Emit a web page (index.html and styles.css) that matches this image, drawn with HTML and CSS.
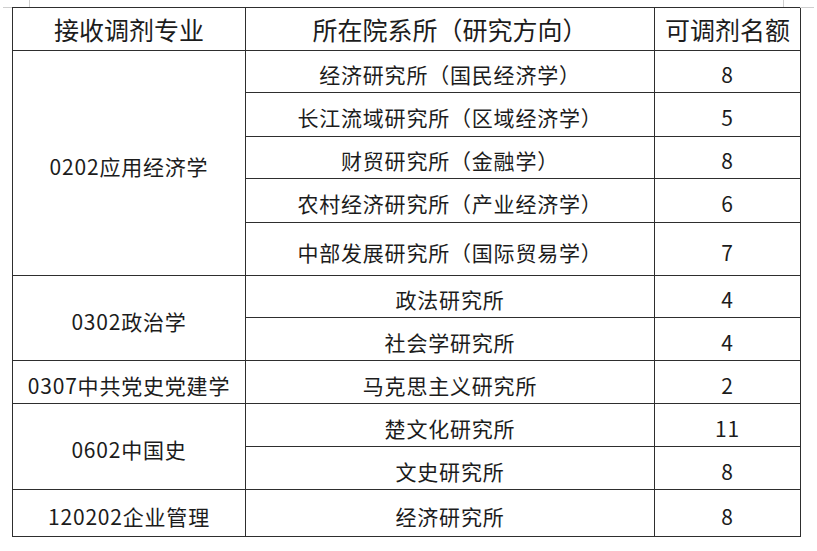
FILE: index.html
```html
<!DOCTYPE html>
<html lang="zh-CN">
<head>
<meta charset="utf-8">
<link rel="stylesheet" href="styles.css">
</head>
<body>
<div class="page">
  <span class="mark mark-tl-v"></span>
  <span class="mark mark-tl-h"></span>
  <span class="mark mark-tr-v"></span>
  <span class="mark mark-tr-h"></span>
  <table class="quota">
    <colgroup>
      <col class="c1"><col class="c2"><col class="c3">
    </colgroup>
    <thead>
      <tr class="h43"><th>接收调剂专业</th><th>所在院系所（研究方向）</th><th>可调剂名额</th></tr>
    </thead>
    <tbody>
      <tr class="h42"><td rowspan="5">0202应用经济学</td><td>经济研究所（国民经济学）</td><td>8</td></tr>
      <tr class="h44"><td>长江流域研究所（区域经济学）</td><td>5</td></tr>
      <tr class="h42"><td>财贸研究所（金融学）</td><td>8</td></tr>
      <tr class="h44"><td>农村经济研究所（产业经济学）</td><td>6</td></tr>
      <tr class="h53"><td>中部发展研究所（国际贸易学）</td><td>7</td></tr>
      <tr class="h42"><td rowspan="2">0302政治学</td><td>政法研究所</td><td>4</td></tr>
      <tr class="h43"><td>社会学研究所</td><td>4</td></tr>
      <tr class="h43"><td>0307中共党史党建学</td><td>马克思主义研究所</td><td>2</td></tr>
      <tr class="h43"><td rowspan="2">0602中国史</td><td>楚文化研究所</td><td>11</td></tr>
      <tr class="h43"><td>文史研究所</td><td>8</td></tr>
      <tr class="h47"><td>120202企业管理</td><td>经济研究所</td><td>8</td></tr>
    </tbody>
  </table>
</div>
</body>
</html>
```
FILE: styles.css
```css
html, body {
  margin: 0;
  padding: 0;
  background: #ffffff;
}
.page {
  position: relative;
  width: 817px;
  height: 551px;
  padding: 7px 0 0 12px;
  box-sizing: border-box;
  font-family: "Noto Sans CJK SC", "Noto Sans", sans-serif;
  color: #1c1c1c;
}
.mark {
  position: absolute;
  background: #cfcfcf;
}
.mark-tl-v { left: 29px; top: 0; width: 1px; height: 7px; }
.mark-tl-h { left: 3px; top: 7px; width: 9px; height: 1px; }
.mark-tr-v { left: 783px; top: 0; width: 1px; height: 7px; }
.mark-tr-h { left: 800px; top: 7px; width: 14px; height: 1px; }
.quota {
  border-collapse: collapse;
  table-layout: fixed;
  width: 788px;
}
.c1 { width: 233px; }
.c2 { width: 409px; }
.c3 { width: 146px; }
.quota th, .quota td {
  border: 1px solid #2e2e2e;
  padding: 0;
  text-align: center;
  vertical-align: middle;
  line-height: 1;
}
.quota th {
  font-size: 25px;
  font-weight: 400;
}
.quota td {
  font-size: 21px;
  letter-spacing: 0.8px;
  padding-top: 6px;
  box-sizing: border-box;
}
.h42 { height: 42px; }
.h43 { height: 43px; }
.h44 { height: 44px; }
.h47 { height: 47px; }
.h53 { height: 53px; }
```
